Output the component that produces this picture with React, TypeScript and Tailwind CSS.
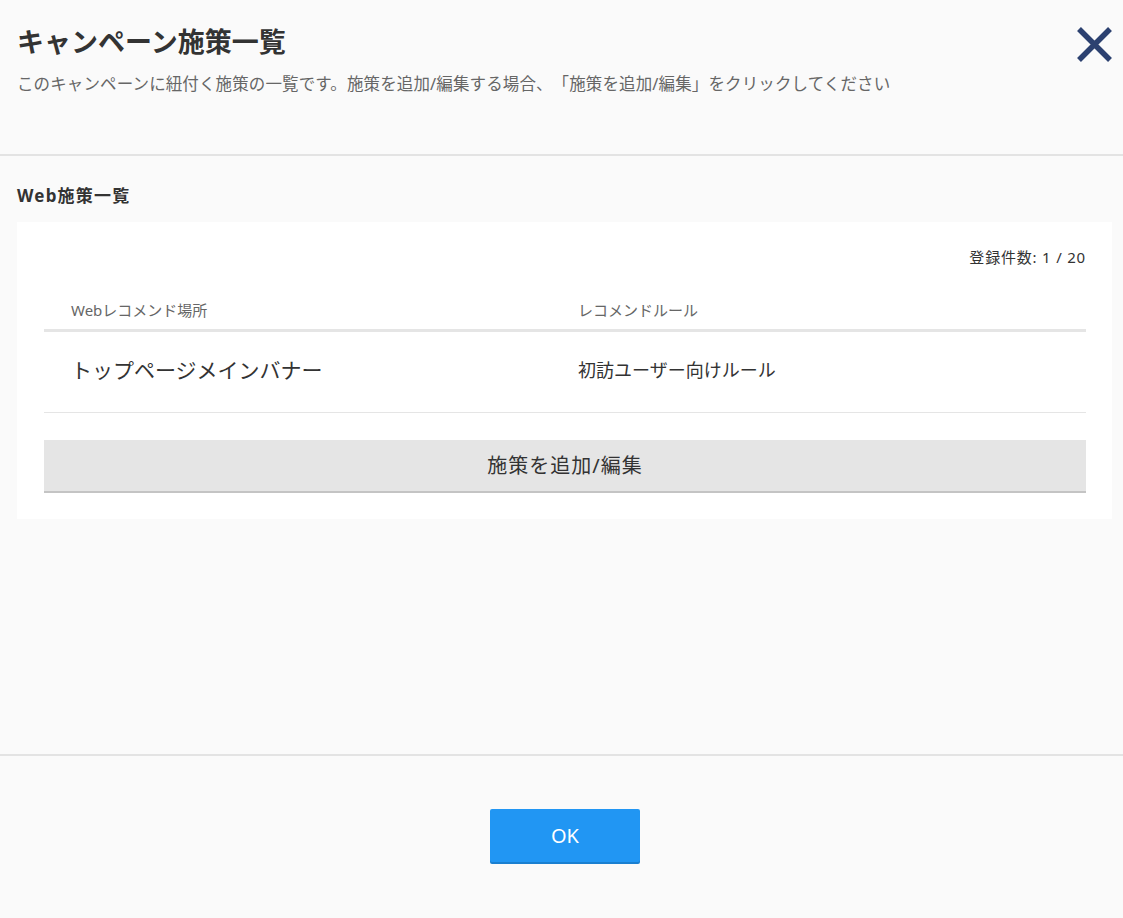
import { useState } from "react";

const rows = [{ id: 1, place: "トップページメインバナー", rule: "初訪ユーザー向けルール" }];

export default function App() {
  const [open, setOpen] = useState(true);

  return (
    <main
      className="flex h-[918px] flex-col bg-[#fafafa] text-[#333] [text-spacing-trim:space-all]"
      style={{ fontFamily: '"Noto Sans", "Noto Sans CJK JP", sans-serif' }}
    >
      {/* Header */}
      <header className="relative h-[156px] shrink-0 border-b-2 border-[#e3e3e3] px-[17px] pt-[24px]">
        <h1 className="text-[27px] font-bold leading-[36px] text-[#333]">
          キャンペーン施策一覧
        </h1>
        <p className="mt-[12px] text-[16.5px] leading-[24px] tracking-[0.12px] text-[#666]">
          このキャンペーンに紐付く施策の一覧です。施策を追加/編集する場合、「施策を追加/編集」をクリックしてください
        </p>
        <button
          onClick={() => setOpen(!open)}
          className="absolute right-[11px] top-[27px] h-[35px] w-[35px]"
          aria-label="close"
        >
          <svg viewBox="0 0 35 35" className="h-[35px] w-[35px]">
            <path d="M2 2 L33 33 M33 2 L2 33" stroke="#2c4170" strokeWidth="5.5" fill="none" />
          </svg>
        </button>
      </header>

      {/* Content */}
      <section className="flex-1 pl-[17px] pr-[11px] pt-[28px]">
        <h2 className="text-[17px] font-bold leading-[24px] tracking-[1.2px] text-[#333]">Web施策一覧</h2>
        <div className="mt-[14px] bg-white pb-[28px] pl-[27px] pr-[26px] pt-[24px]">
          <p className="text-right text-[15px] leading-[22px] tracking-[0.8px] text-[#333]">登録件数: 1 / 20</p>

          <table className="mt-[31px] w-full text-left">
            <thead>
              <tr className="border-b-[3px] border-[#e5e5e5]">
                <th className="w-[534px] px-[27px] pb-[8px] text-[15px] font-normal leading-[22px] text-[#666]">
                  Webレコメンド場所
                </th>
                <th className="px-0 pb-[8px] text-[15px] font-normal leading-[22px] text-[#666]">
                  レコメンドルール
                </th>
              </tr>
            </thead>
            <tbody>
              {rows.map((r) => (
                <tr key={r.id} className="h-[82px] border-b border-[#e5e5e5]">
                  <td className="px-[27px] pb-[3px] text-[21px] text-[#333]">{r.place}</td>
                  <td className="pb-[3px] text-[18px] text-[#333]">{r.rule}</td>
                </tr>
              ))}
            </tbody>
          </table>

          <button className="mt-[27px] flex h-[51px] w-full items-center justify-center bg-[#e5e5e5] text-[20px] tracking-[1px] text-[#333] shadow-[0_2px_0_#c4c4c4]">
            施策を追加/編集
          </button>
        </div>
      </section>

      {/* Footer */}
      <footer className="flex h-[164px] shrink-0 justify-center border-t-2 border-[#e3e3e3] pl-[7px] pt-[53px]">
        <button className="h-[53px] w-[150px] rounded-[2px] bg-[#2196f3] text-[20px] text-white shadow-[0_2px_0_#1a7fd0]">
          OK
        </button>
      </footer>
    </main>
  );
}
